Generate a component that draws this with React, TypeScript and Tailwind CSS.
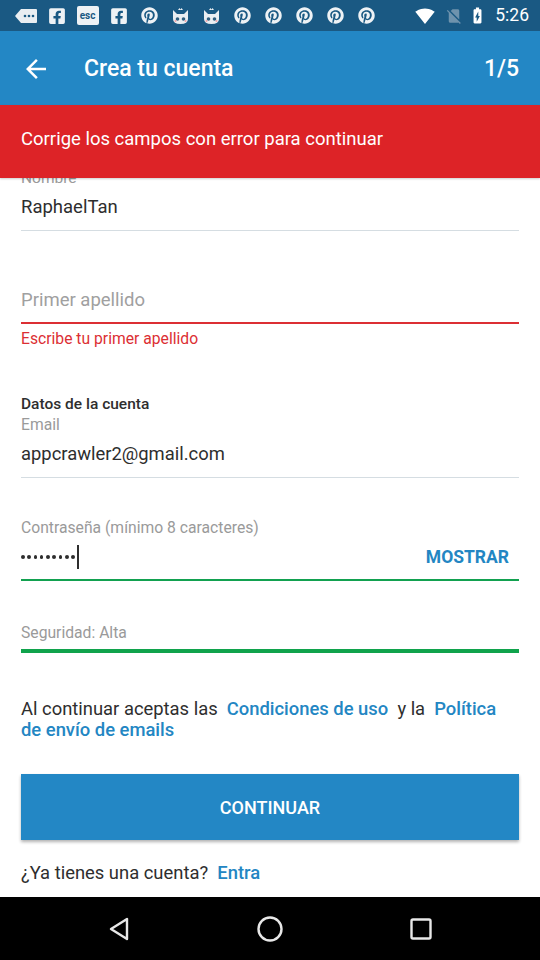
import React from "react";
import { MdArrowBack, MdSignalWifi4Bar, MdNoSim, MdBatteryChargingFull } from "react-icons/md";
import { FaFacebookSquare, FaPinterest } from "react-icons/fa";

function Cat() {
  return (
    <svg width="19" height="18" viewBox="0 0 19 18">
      <path d="M2 3 L6 7 L13 7 L17 3 L17 12 Q17 17 9.5 17 Q2 17 2 12 Z" fill="#e9eef2" />
      <path d="M7 3 L8.5 1 L9.5 2.5 L10.5 1 L12 3 Z" fill="#e9eef2" />
      <circle cx="6.5" cy="12" r="1.8" fill="#2f5f80" />
      <circle cx="12.5" cy="12" r="1.8" fill="#2f5f80" />
      <circle cx="4.5" cy="14" r="1" fill="#f2a0a8" />
      <circle cx="14.5" cy="14" r="1" fill="#f2a0a8" />
    </svg>
  );
}

function Slot({ children }: { children: React.ReactNode }) {
  return <div className="w-[31px] flex justify-center items-center">{children}</div>;
}

function StatusBar() {
  return (
    <div className="h-[31px] bg-[#1a5983] flex items-center pl-[10px] pr-[11px] text-white">
      <div className="flex items-center">
        <Slot>
          <svg width="22" height="14" viewBox="0 0 22 14">
            <path d="M6 0 H21 Q22 0 22 1 V13 Q22 14 21 14 H6 L0 7 Z" fill="#e9eef2" />
            <circle cx="10" cy="7" r="1.3" fill="#1a5983" />
            <circle cx="14" cy="7" r="1.3" fill="#1a5983" />
            <circle cx="18" cy="7" r="1.3" fill="#1a5983" />
          </svg>
        </Slot>
        <Slot><FaFacebookSquare className="text-[#eef2f5]" size={18} /></Slot>
        <Slot>
          <div className="w-[22px] h-[19px] bg-[#eef2f5] rounded-[2px] text-[#1a5983] text-[10px] font-bold leading-[19px] text-center">esc</div>
        </Slot>
        <Slot><FaFacebookSquare className="text-[#eef2f5]" size={18} /></Slot>
        <Slot><FaPinterest className="text-[#eef2f5]" size={17} /></Slot>
        <Slot><Cat /></Slot>
        <Slot><Cat /></Slot>
        <Slot><FaPinterest className="text-[#eef2f5]" size={17} /></Slot>
        <Slot><FaPinterest className="text-[#eef2f5]" size={17} /></Slot>
        <Slot><FaPinterest className="text-[#eef2f5]" size={17} /></Slot>
        <Slot><FaPinterest className="text-[#eef2f5]" size={17} /></Slot>
        <Slot><FaPinterest className="text-[#eef2f5]" size={17} /></Slot>
      </div>
      <div className="ml-auto flex items-center">
        <MdSignalWifi4Bar size={20} className="text-white" />
        <MdNoSim size={18} className="text-[#6f93ad] ml-[10px]" />
        <MdBatteryChargingFull size={19} className="text-white ml-[5px]" />
        <span className="text-[17.5px] leading-none ml-[8px]">5:26</span>
      </div>
    </div>
  );
}

function Underline({ color = "bg-[#d5dde2]", h = "h-px" }: { color?: string; h?: string }) {
  return <div className={`${h} ${color}`} />;
}

export default function App() {
  return (
    <div className="w-[540px] h-[960px] flex flex-col bg-white overflow-hidden" style={{ fontFamily: "Roboto, 'Noto Sans', sans-serif" }}>
      <StatusBar />
      <div className="h-[74px] bg-[#2387c5] flex items-center text-white pt-[2px]">
        <MdArrowBack size={30} className="ml-[21px]" />
        <div className="ml-[33px] text-[23px] font-medium">Crea tu cuenta</div>
        <div className="ml-auto mr-[21px] text-[23px] font-medium">1/5</div>
      </div>
      <div className="relative z-10 h-[73px] bg-[#dd2327] flex items-center px-[21px] pb-[4px] text-white text-[18.5px] shadow-[0_1px_2px_rgba(0,0,0,0.2)]">
        Corrige los campos con error para continuar
      </div>

      <div className="flex-1 overflow-hidden px-[21px] flex flex-col">
        <div className="-mt-[8px] text-[15.5px] leading-[16px] text-[#9a9a9a]">Nombre</div>
        <div className="mt-[10px] text-[18.5px] leading-[22px] text-[#2e2e2e]">RaphaelTan</div>
        <div className="mt-[12px]"><Underline /></div>

        <div className="mt-[58px] text-[18.5px] leading-[22px] text-[#a0a0a0]">Primer apellido</div>
        <div className="mt-[11px]"><Underline color="bg-[#dc2f34]" h="h-[2px]" /></div>
        <div className="mt-[7px] text-[15.7px] leading-[16px] text-[#dc2f34]">Escribe tu primer apellido</div>

        <div className="mt-[49px] text-[15.5px] leading-[16px] font-medium text-[#2e2e2e]">Datos de la cuenta</div>
        <div className="mt-[5px] text-[15.7px] leading-[16px] text-[#9a9a9a]">Email</div>
        <div className="mt-[10px] text-[18.4px] leading-[22px] text-[#2e2e2e]">appcrawler2@gmail.com</div>
        <div className="mt-[12px]"><Underline /></div>

        <div className="mt-[42px] text-[15.7px] leading-[16px] text-[#9a9a9a]">Contraseña (mínimo 8 caracteres)</div>
        <div className="mt-[6px] h-[30px] flex items-center">
          <div className="flex items-center gap-[2.8px]">
            {Array.from({ length: 9 }).map((_, i) => (
              <div key={i} className="w-[3.5px] h-[3.5px] rounded-full bg-[#2e2e2e]" />
            ))}
          </div>
          <div className="w-[2px] h-[24px] bg-[#2e2e2e] ml-[2px]" />
          <div className="ml-auto mr-[10px] h-[30px] flex items-center text-[17.5px] font-bold text-[#2386c3]">MOSTRAR</div>
        </div>
        <div className="mt-[7px]"><Underline color="bg-[#12a150]" h="h-[2px]" /></div>

        <div className="mt-[44px] text-[15.7px] leading-[16px] text-[#9a9a9a]">Seguridad: Alta</div>
        <div className="mt-[8px]"><Underline color="bg-[#10a34c]" h="h-[4px]" /></div>

        <div className="mt-[45px] text-[18.4px] leading-[21px] text-[#2e2e2e]">
          Al continuar aceptas las&nbsp;{" "}
          <span className="font-medium text-[#2386c3]">Condiciones de uso</span>&nbsp;{" "}
          y la&nbsp;{" "}
          <span className="font-medium text-[#2386c3]">Política de envío de emails</span>
        </div>

        <button className="mt-[34px] h-[66px] bg-[#2387c5] text-white text-[18px] font-medium shadow-[0_2px_3px_rgba(0,0,0,0.3)]">
          CONTINUAR
        </button>

        <div className="mt-[22px] text-[18.4px] leading-[22px] text-[#2e2e2e]">
          ¿Ya tienes una cuenta?&nbsp;{" "}
          <span className="font-medium text-[#2386c3]">Entra</span>
        </div>
      </div>

      <div className="h-[63px] bg-black flex items-center justify-center gap-[111px]">
        <div className="w-[40px] flex justify-center">
          <svg width="22" height="24" viewBox="0 0 22 24">
            <path d="M19 2 L19 22 L3 12 Z" fill="none" stroke="#e8e8e8" strokeWidth="2.4" strokeLinejoin="round" />
          </svg>
        </div>
        <div className="w-[40px] flex justify-center">
          <svg width="26" height="26" viewBox="0 0 26 26">
            <circle cx="13" cy="13" r="11.5" fill="none" stroke="#e8e8e8" strokeWidth="2.4" />
          </svg>
        </div>
        <div className="w-[40px] flex justify-center">
          <svg width="22" height="22" viewBox="0 0 22 22">
            <rect x="1.5" y="1.5" width="19" height="19" rx="1.5" fill="none" stroke="#e8e8e8" strokeWidth="2.4" />
          </svg>
        </div>
      </div>
    </div>
  );
}
